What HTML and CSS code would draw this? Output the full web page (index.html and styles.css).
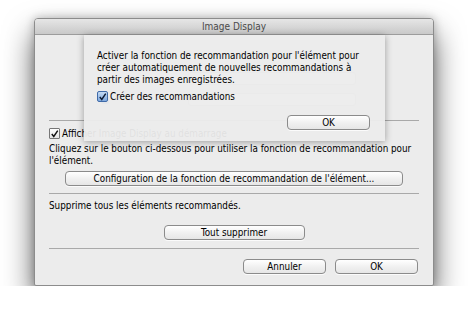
FILE: index.html
```html
<!DOCTYPE html>
<html lang="fr">
<head>
  <meta charset="utf-8" />
  <title>Image Display</title>
  <link rel="stylesheet" href="styles.css">
</head>
<body>
  <div class="window">
    <div class="titlebar">Image Display</div>

    <div class="content">
      <div class="ghost">
        <div class="ghost-row">
          <span class="ghost-popup"></span>
        </div>
        <div class="ghost-row">
          <span class="ghost-box"></span>
          <span class="ghost-popup"></span>
        </div>
      </div>

      <div class="separator"></div>

      <label class="check-row">
        <span class="check">
          <svg width="10" height="10" viewBox="0 0 10 10"><path d="M2 5 L4.2 7.8 L8.6 1.2" fill="none" stroke="#111" stroke-width="1.6"/></svg>
        </span>
        Afficher Image Display au démarrage
      </label>

      <p class="text">Cliquez sur le bouton ci-dessous pour utiliser la fonction de recommandation pour l'élément.</p>
      <div class="center">
        <button class="btn btn-config">Configuration de la fonction de recommandation de l'élément...</button>
      </div>

      <div class="separator sep-2"></div>

      <p class="text text-del">Supprime tous les éléments recommandés.</p>
      <div class="center">
        <button class="btn btn-delete">Tout supprimer</button>
      </div>

      <div class="separator sep-3"></div>

      <div class="actions">
        <button class="btn btn-action">Annuler</button>
        <button class="btn btn-action">OK</button>
      </div>
    </div>

    <div class="sheet">
      <p class="sheet-text">Activer la fonction de recommandation pour l'élément pour créer automatiquement de nouvelles recommandations à partir des images enregistrées.</p>
      <label class="check-row sheet-check">
        <span class="check check-blue">
          <svg width="10" height="10" viewBox="0 0 10 10"><path d="M2 5 L4.2 7.8 L8.6 1.2" fill="none" stroke="#0c1a33" stroke-width="1.6"/></svg>
        </span>
        Créer des recommandations
      </label>
      <div class="sheet-actions">
        <button class="btn btn-action btn-sheet">OK</button>
      </div>
    </div>
  </div>
</body>
</html>
```

FILE: styles.css
```css
body {
  margin: 0;
  background: #fff;
  font-family: 'DejaVu Sans Condensed', 'DejaVu Sans', sans-serif;
  font-stretch: condensed;
  font-size: 9.8px;
  color: #000;
}

.window {
  position: relative;
  margin: 18px 0 0 34px;
  width: 400px;
  height: 268px;
  box-sizing: border-box;
  background: #ececec;
  border: 1px solid #8c8c8c;
  border-radius: 4px 4px 2px 2px;
  box-shadow: 0 16px 30px rgba(0, 0, 0, 0.62), 0 0 10px rgba(0, 0, 0, 0.25);
}

.titlebar {
  height: 15px;
  line-height: 15px;
  text-align: center;
  color: #4a4a4a;
  font-size: 10px;
  background: linear-gradient(#e6e6e6, #c9c9c9);
  border-bottom: 1px solid #9c9c9c;
  border-radius: 3px 3px 0 0;
}

.content {
  padding: 0 14px;
}

.ghost {
  height: 85px;
  box-sizing: border-box;
  padding: 38px 0 0 52px;
}

.ghost-row {
  display: flex;
  align-items: center;
  height: 11px;
  margin-bottom: 10px;
}

.ghost-box {
  width: 8px;
  height: 8px;
  background: #6a90c8;
  border-radius: 2px;
}

.ghost-popup {
  width: 166px;
  height: 11px;
  margin-left: 87px;
  border: 1px solid #b8b8b8;
  border-radius: 3px;
  background: #f8f8f8;
}

.ghost-box + .ghost-popup {
  margin-left: 79px;
}

.separator {
  height: 1px;
  background: #a9a9a9;
}

.check-row {
  display: flex;
  align-items: center;
  gap: 2px;
  height: 12px;
  margin-top: 6px;
}

.check {
  display: flex;
  width: 9px;
  height: 9px;
  border: 1px solid #777;
  background: linear-gradient(#fff, #e4e4e4);
  border-radius: 1px;
}

.check-blue {
  border-color: #3f6aa8;
  border-radius: 2px;
  background: linear-gradient(#c4daf4, #7fa9de);
}

.text {
  margin: 4px 0 0;
  line-height: 12px;
}

.center {
  display: flex;
  justify-content: center;
}

.btn {
  font-family: inherit;
  font-stretch: condensed;
  font-size: 9.8px;
  color: #000;
  height: 15px;
  padding: 0;
  border: 1px solid #8b8b8b;
  border-radius: 4px;
  background: linear-gradient(#ffffff, #f1f1f1 50%, #e6e6e6);
  box-shadow: 0 1px 0 rgba(255, 255, 255, 0.8);
}

.btn-config {
  width: 338px;
  margin-top: 4px;
}

.sep-2 {
  margin-top: 7px;
}

.text-del {
  margin-top: 6px;
}

.btn-delete {
  width: 141px;
  margin-top: 13px;
}

.sep-3 {
  margin-top: 8px;
}

.actions {
  display: flex;
  justify-content: flex-end;
  gap: 9px;
  margin-top: 10px;
  padding-right: 1px;
}

.btn-action {
  width: 83px;
}

.sheet {
  position: absolute;
  left: 49px;
  top: 16px;
  width: 301px;
  height: 106px;
  box-sizing: border-box;
  padding: 15px 15px 0 13px;
  background: rgba(236, 236, 236, 0.95);
  box-shadow: 0 1px 7px rgba(0, 0, 0, 0.35);
}

.sheet-text {
  margin: 0;
  line-height: 12px;
}

.sheet-check {
  margin-top: 4px;
}

.sheet-actions {
  display: flex;
  justify-content: flex-end;
  margin-top: 13px;
}
```
